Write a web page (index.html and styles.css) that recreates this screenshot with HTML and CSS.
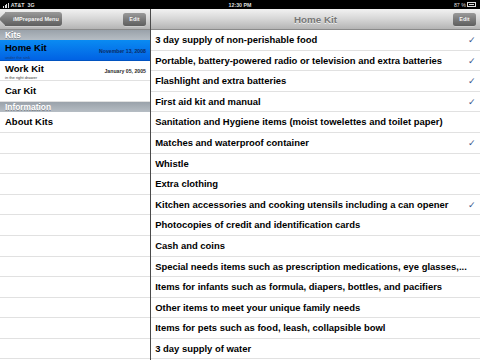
FILE: index.html
```html
<!DOCTYPE html>
<html lang="en">
<head>
  <meta charset="UTF-8">
  <title>iMPrepared</title>
  <link rel="stylesheet" href="styles.css">
</head>
<body>
  <div class="statusbar">
    <div class="carrier">
      <span class="bars"><i style="height:2px"></i><i style="height:3px"></i><i style="height:4px"></i><i style="height:5px"></i></span>
      AT&amp;T&nbsp; 3G
    </div>
    <div class="clock">12:30 PM</div>
    <div class="battery">87 % <span class="batt"><span class="batt-fill"></span></span></div>
  </div>

  <div class="split">
    <div class="master">
      <div class="navbar">
        <span class="back-btn">iMPrepared Menu</span>
        <span class="edit-btn">Edit</span>
      </div>
      <div class="section-head">Kits</div>
      <div class="kit selected">
        <div class="kit-name">Home Kit</div>
        <span class="kit-date">November 13, 2008</span>
        <div class="kit-note">under the sink</div>
      </div>
      <div class="kit">
        <div class="kit-name">Work Kit</div>
        <span class="kit-date">January 05, 2005</span>
        <div class="kit-note">in the right drawer</div>
      </div>
      <div class="kit plain"><span class="kit-name">Car Kit</span></div>
      <div class="section-head">Information</div>
      <div class="kit plain"><span class="kit-name">About Kits</span></div>
      <div class="empty"></div>
      <div class="empty"></div>
      <div class="empty"></div>
      <div class="empty"></div>
      <div class="empty"></div>
      <div class="empty"></div>
      <div class="empty"></div>
      <div class="empty"></div>
      <div class="empty"></div>
      <div class="empty"></div>
      <div class="empty"></div>
    </div>

    <div class="detail">
      <div class="navbar">
        <span class="title">Home Kit</span>
        <span class="edit-btn">Edit</span>
      </div>
      <ul class="items">
        <li class="done">3 day supply of non-perishable food</li>
        <li class="done">Portable, battery-powered radio or television and extra batteries</li>
        <li class="done">Flashlight and extra batteries</li>
        <li class="done">First aid kit and manual</li>
        <li>Sanitation and Hygiene items (moist towelettes and toilet paper)</li>
        <li class="done">Matches and waterproof container</li>
        <li>Whistle</li>
        <li>Extra clothing</li>
        <li class="done">Kitchen accessories and cooking utensils including a can opener</li>
        <li>Photocopies of credit and identification cards</li>
        <li>Cash and coins</li>
        <li>Special needs items such as prescription medications, eye glasses,...</li>
        <li>Items for infants such as formula, diapers, bottles, and pacifiers</li>
        <li>Other items to meet your unique family needs</li>
        <li>Items for pets such as food, leash, collapsible bowl</li>
        <li>3 day supply of water</li>
      </ul>
    </div>
  </div>
</body>
</html>
```

FILE: styles.css
```css
* { box-sizing: border-box; }

body {
  margin: 0;
  width: 480px;
  height: 360px;
  overflow: hidden;
  background: #fff;
  font-family: "Liberation Sans", Arial, sans-serif;
  color: #000;
}

/* status bar */
.statusbar {
  height: 9.4px;
  background: #000;
  color: #ddd;
  font-size: 5.3px;
  font-weight: bold;
  display: flex;
  align-items: center;
  justify-content: space-between;
  padding: 0 4px 0 3px;
  position: relative;
}
.carrier { display: flex; align-items: flex-end; gap: 2px; }
.bars { display: flex; align-items: flex-end; gap: 0.6px; height: 5px; }
.bars i { display: block; width: 1px; background: #ddd; }
.clock {
  position: absolute;
  left: 0;
  right: 0;
  text-align: center;
  top: 1.8px;
}
.battery { display: flex; align-items: center; gap: 1px; font-weight: normal; }
.batt {
  width: 9px;
  height: 4.5px;
  border: 0.8px solid #ddd;
  padding: 0.6px;
  display: flex;
}
.batt-fill { width: 85%; background: #ddd; }

/* split view */
.split {
  display: flex;
  height: 350.6px;
}
.master {
  width: 151px;
  border-right: 1px solid #4a4a4a;
  overflow: hidden;
}
.detail {
  flex: 1;
  overflow: hidden;
}

.navbar {
  height: 20.6px;
  background: linear-gradient(#f2f2f2, #d6d6d6 50%, #b4b4b4);
  border-bottom: 1px solid #8a8a8a;
  display: flex;
  align-items: center;
  justify-content: space-between;
  padding: 0 4px;
  position: relative;
}
.master .navbar { padding-left: 3px; }

.back-btn {
  height: 14px;
  padding: 0 3px 0 8px;
  margin-left: 2px;
  font-size: 5.5px;
  font-weight: bold;
  color: #fff;
  line-height: 14px;
  background: linear-gradient(#9a9a9a, #7a7a7a 50%, #5e5e5e);
  border-radius: 0 3px 3px 0;
  position: relative;
  box-shadow: 0 0.5px 0 rgba(255,255,255,0.5);
}
.back-btn::before {
  content: "";
  position: absolute;
  left: -4.5px;
  top: 2px;
  width: 9.9px;
  height: 9.9px;
  background: linear-gradient(135deg, #9a9a9a, #7a7a7a 50%, #5e5e5e);
  transform: rotate(45deg);
  border-radius: 0 0 0 2px;
}
.edit-btn {
  width: 23px;
  height: 13px;
  font-size: 5.5px;
  font-weight: bold;
  color: #fff;
  line-height: 13px;
  text-align: center;
  border-radius: 2.5px;
  background: linear-gradient(#9a9a9a, #7a7a7a 50%, #5e5e5e);
  box-shadow: 0 0.5px 0 rgba(255,255,255,0.5);
  margin-left: auto;
}
.back-btn, .edit-btn { text-shadow: 0 -0.5px 0 rgba(0,0,0,0.4); }

.title {
  position: absolute;
  left: 0;
  right: 0;
  text-align: center;
  font-size: 9.8px;
  font-weight: bold;
  color: #777;
  text-shadow: 0 1px 0 rgba(255,255,255,0.7);
}

/* master list */
.section-head {
  height: 10.3px;
  line-height: 10.3px;
  padding-left: 5px;
  font-size: 8.4px;
  font-weight: bold;
  color: #fff;
  text-shadow: 0 0.5px 0 rgba(0,0,0,0.3);
  background: linear-gradient(#9aa2aa, #b6bdc4);
}
.kit {
  height: 20.6px;
  border-bottom: 1px solid #e1e1e1;
  padding: 3px 4px 0 5px;
  position: relative;
  font-size: 9.5px;
  line-height: 10px;
}
.kit.plain {
  display: flex;
  align-items: center;
  padding-top: 0;
}
.kit-name {
  font-weight: bold;
}
.kit-date {
  position: absolute;
  right: 4px;
  top: 7.5px;
  font-size: 5.2px;
  line-height: 6px;
  font-weight: bold;
  color: #2a2a2a;
}
.kit-note {
  font-size: 4px;
  line-height: 4px;
  color: #333;
  margin-top: 2.5px;
}
.kit.selected {
  background: linear-gradient(#0a8bf2, #0162e4);
  border-bottom-color: #0153c0;
}
.kit.selected .kit-date { color: #0c2a66; }
.kit.selected .kit-note { color: #1b3d78; }
.empty {
  height: 20.6px;
  border-bottom: 1px solid #e1e1e1;
}

/* detail list */
.items {
  list-style: none;
  margin: 0;
  padding: 0;
}
.items li {
  height: 20.6px;
  line-height: 20px;
  border-bottom: 1px solid #e1e1e1;
  padding: 0 14px 0 4.2px;
  font-size: 9.45px;
  font-weight: bold;
  white-space: nowrap;
  position: relative;
}
.items li.done::after {
  content: "\2713";
  position: absolute;
  right: 4px;
  top: 0;
  font-size: 9px;
  font-weight: normal;
  color: #36528a;
}
```
